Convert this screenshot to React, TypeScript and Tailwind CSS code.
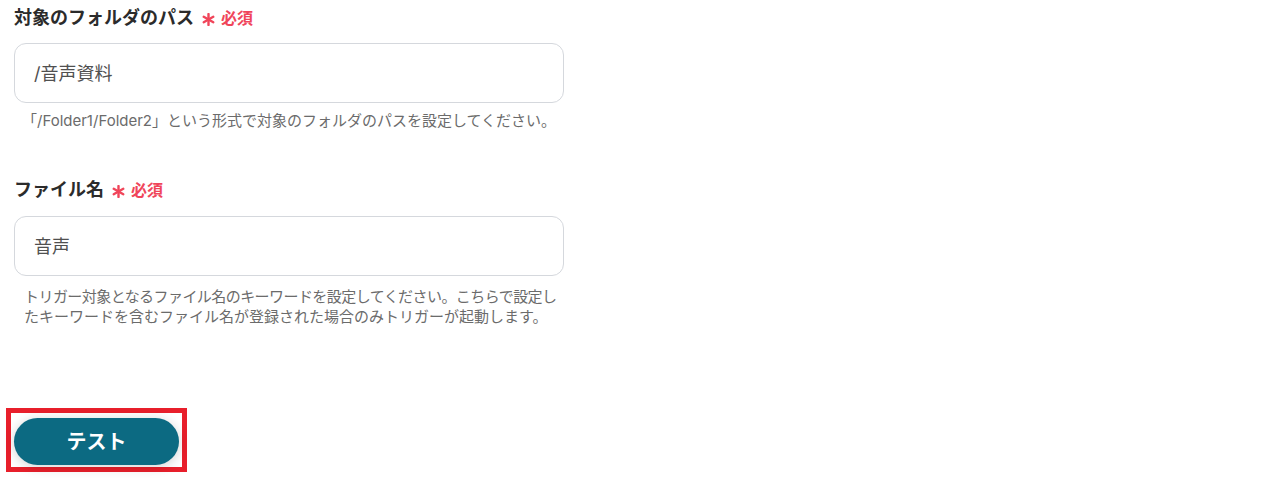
import React from 'react'

const font = { fontFamily: 'Inter, "Noto Sans CJK JP", sans-serif' }

function Asterisk() {
  return (
    <svg width="13" height="13" viewBox="0 0 13 13" className="ml-[8px] mr-[6px] mt-[2px]">
      <g stroke="#f0455a" strokeWidth="2.4" strokeLinecap="round">
        <line x1="6.5" y1="1" x2="6.5" y2="12" />
        <line x1="1.7" y1="3.75" x2="11.3" y2="9.25" />
        <line x1="1.7" y1="9.25" x2="11.3" y2="3.75" />
      </g>
    </svg>
  )
}

// Label with required mark
function Label({ text }: { text: string }) {
  return (
    <div className="flex items-center h-[24px]">
      <span className="text-[18px] font-bold text-[#2b2b2b] leading-[24px]">{text}</span>
      <Asterisk />
      <span className="text-[16px] font-bold text-[#f0455a] leading-[24px]">必須</span>
    </div>
  )
}

function Input({ value }: { value: string }) {
  return (
    <div className="w-[550px] h-[60px] rounded-[12px] border border-[#d5d8dd] bg-white flex items-center px-[19px]">
      <span className="text-[18px] text-[#505050]">{value}</span>
    </div>
  )
}

export default function App() {
  return (
    <div className="min-h-[478px] bg-white pl-[14px] pt-[6px]" style={font}>
      <Label text="対象のフォルダのパス" />
      <div className="mt-[13px]">
        <Input value="/音声資料" />
      </div>
      <p className="mt-[8px] pl-[8px] text-[15px] leading-[20px] text-[#6b6b6b] w-[560px]">
        「/Folder1/Folder2」という形式で対象のフォルダのパスを設定してください。
      </p>

      <div className="mt-[47px]">
        <Label text="ファイル名" />
      </div>
      <div className="mt-[14px]">
        <Input value="音声" />
      </div>
      <p className="mt-[11px] pl-[10px] text-[15px] leading-[20px] text-[#6b6b6b] w-[580px]">
        <span className="tracking-[-0.56px]">トリガー対象となるファイル名のキーワードを設定してください。こちらで設定し</span>
        <br />
        たキーワードを含むファイル名が登録された場合のみトリガーが起動します。
      </p>

      <div className="mt-[81px] -ml-[8px] inline-block border-[5px] border-[#e81f2b] pl-[3px] pt-[5px] pr-[3px] pb-[2px]">
        <button className="w-[165px] h-[47px] rounded-full bg-[#0c6a82] text-white text-[20px] font-bold shadow-[0_2px_12px_rgba(0,0,0,0.18)]">
          テスト
        </button>
      </div>
    </div>
  )
}
